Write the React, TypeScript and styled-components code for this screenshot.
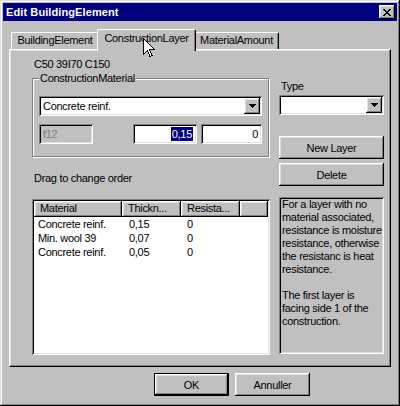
import styled, { createGlobalStyle } from 'styled-components'

const GlobalStyle = createGlobalStyle`
  html, body {
    margin: 0;
    padding: 0;
    background: #c0c0c0;
  }
  body {
    font-family: "Liberation Sans", Arial, sans-serif;
    font-size: 11px;
    overflow: hidden;
  }
  * {
    box-sizing: border-box;
  }
`

const raised = `
  background: #c0c0c0;
  box-shadow: inset -1px -1px #000, inset 1px 1px #fff, inset -2px -2px #808080, inset 2px 2px #dfdfdf;
`

const sunken = `
  box-shadow: inset 1px 1px #808080, inset -1px -1px #fff, inset 2px 2px #000, inset -2px -2px #dfdfdf;
`

const Window = styled.div`
  position: relative;
  width: 400px;
  height: 406px;
  padding: 3px;
  background: #c0c0c0;
  box-shadow: inset -1px -1px #000, inset 1px 1px #dfdfdf, inset -2px -2px #808080, inset 2px 2px #fff;
  display: flex;
  flex-direction: column;
  color: #000;
  letter-spacing: -0.3px;
`

const TitleBar = styled.div`
  height: 18px;
  background: #000080;
  color: #fff;
  display: flex;
  align-items: center;
  justify-content: space-between;
  padding: 0 2px 0 3px;
  font-weight: bold;
  letter-spacing: 0.1px;
  line-height: 18px;
`

const CloseButton = styled.div`
  ${raised}
  width: 16px;
  height: 14px;
  display: flex;
  align-items: center;
  justify-content: center;
`

const TabRow = styled.div`
  position: relative;
  z-index: 1;
  display: flex;
  align-items: flex-end;
  height: 20px;
  margin-top: 8px;
  padding-left: 8px;
`

const Tab = styled.div<{ $active?: boolean; $w: number }>`
  position: relative;
  z-index: ${(p) => (p.$active ? 2 : 1)};
  width: ${(p) => p.$w}px;
  height: ${(p) => (p.$active ? 22 : 17)}px;
  margin: 0 ${(p) => (p.$active ? '-2px' : '0')} ${(p) => (p.$active ? '-2px' : '0')};
  padding-top: ${(p) => (p.$active ? 1 : 0)}px;
  background: #c0c0c0;
  border-top: 1px solid #fff;
  border-left: 1px solid #fff;
  border-right: 1px solid #000;
  border-radius: 2px 2px 0 0;
  box-shadow: inset -1px 0 #808080;
  text-align: center;
  line-height: 15px;
  white-space: nowrap;
`

const Panel = styled.div`
  width: 382px;
  height: 318px;
  margin-left: 6px;
  border: 1px solid;
  border-color: #fff #000 #000 #fff;
  box-shadow: inset -1px -1px #808080, inset 1px 1px #dfdfdf;
  padding: 8px 6px 0 22px;
  display: flex;
  gap: 9px;
`

const Column = styled.div<{ $w: number }>`
  width: ${(p) => p.$w}px;
  display: flex;
  flex-direction: column;
`

const Caption = styled.div<{ $top?: number }>`
  margin-top: ${(p) => p.$top ?? 0}px;
  padding-left: 2px;
  line-height: 13px;
  height: 13px;
  white-space: nowrap;
`

const GroupBox = styled.div`
  position: relative;
  margin-top: 7px;
  width: 237px;
  border: 1px solid #808080;
  box-shadow: inset 1px 1px #fff, 1px 1px #fff;
  padding: 17px 6px 12px 6px;
`

const Legend = styled.span`
  position: absolute;
  top: -7px;
  left: 6px;
  padding: 0 1px;
  background: #c0c0c0;
  line-height: 13px;
`

const Combo = styled.div<{ $top?: number }>`
  ${sunken}
  margin-top: ${(p) => p.$top ?? 0}px;
  height: 20px;
  padding: 2px;
  background: #fff;
  display: flex;
`

const ComboText = styled.div`
  flex: 1;
  padding-left: 2px;
  line-height: 16px;
  white-space: nowrap;
`

const DropButton = styled.div`
  ${raised}
  width: 16px;
  height: 16px;
  display: flex;
  align-items: center;
  justify-content: center;
`

const FieldRow = styled.div`
  margin-top: 8px;
  display: flex;
  justify-content: space-between;
`

const FieldPair = styled.div`
  display: flex;
  gap: 4px;
`

const Field = styled.div<{ $w: number; $disabled?: boolean; $right?: boolean }>`
  ${sunken}
  width: ${(p) => p.$w}px;
  height: 20px;
  padding: 2px 4px;
  background: ${(p) => (p.$disabled ? '#c0c0c0' : '#fff')};
  color: ${(p) => (p.$disabled ? '#808080' : '#000')};
  text-align: ${(p) => (p.$right ? 'right' : 'left')};
  line-height: 16px;
`

const Selected = styled.span`
  background: #000080;
  color: #fff;
  padding: 1px 1px;
`

const ListView = styled.div`
  ${sunken}
  margin-top: 14px;
  height: 156px;
  padding: 2px;
  background: #fff;
  display: flex;
  flex-direction: column;
`

const HeaderRow = styled.div`
  display: flex;
  height: 16px;
`

const HeaderCell = styled.div<{ $w?: number }>`
  ${raised}
  ${(p) => (p.$w ? `width: ${p.$w}px;` : 'flex: 1;')}
  height: 16px;
  padding-left: 6px;
  line-height: 14px;
  white-space: nowrap;
`

const Row = styled.div`
  display: flex;
  height: 14px;
  line-height: 14px;
`

const Cell = styled.div<{ $w?: number; $pad?: number }>`
  ${(p) => (p.$w ? `width: ${p.$w}px;` : 'flex: 1;')}
  padding-left: ${(p) => p.$pad ?? 0}px;
  white-space: nowrap;
`

const Button = styled.div<{ $top?: number; $w?: number; $default?: boolean }>`
  ${raised}
  margin-top: ${(p) => p.$top ?? 0}px;
  width: ${(p) => (p.$w ? `${p.$w}px` : '100%')};
  height: 23px;
  display: flex;
  align-items: center;
  justify-content: center;
  ${(p) => (p.$default ? 'border: 1px solid #000;' : '')}
`

const InfoBox = styled.div`
  ${sunken}
  margin-top: 11px;
  height: 157px;
  padding: 1px 3px;
  line-height: 13px;
  white-space: nowrap;
`

const ButtonBar = styled.div`
  display: flex;
  gap: 6px;
  margin-top: 6px;
  padding-left: 151px;
`

const Cursor = styled.svg`
  position: absolute;
  left: 143px;
  top: 38px;
  z-index: 5;
`

const CloseGlyph = () => {
  const rows = ['11000011', '01100110', '00111100', '00011000', '00111100', '01100110', '11000011']
  return (
    <svg width="8" height="7" viewBox="0 0 8 7" shapeRendering="crispEdges">
      {rows.flatMap((r, y) =>
        r.split('').map((c, x) => (c === '1' ? <rect key={`${x}_${y}`} x={x} y={y} width="1" height="1" fill="#000" /> : null)),
      )}
    </svg>
  )
}

const DownArrow = () => (
  <svg width="7" height="4" viewBox="0 0 7 4" shapeRendering="crispEdges">
    <path d="M0 0h7v1H6v1H5v1H4v1H3V3H2V2H1V1H0z" fill="#000" />
  </svg>
)

const layers = [
  { material: 'Concrete reinf.', thickness: '0,15', resistance: '0' },
  { material: 'Min. wool 39', thickness: '0,07', resistance: '0' },
  { material: 'Concrete reinf.', thickness: '0,05', resistance: '0' },
]

const infoLines = [
  'For a layer with no',
  'material associated,',
  'resistance is moisture',
  'resistance, otherwise',
  'the resistanc is heat',
  'resistance.',
  '',
  'The first layer is',
  'facing side 1 of the',
  'construction.',
]

export default function App() {
  return (
    <>
      <GlobalStyle />
      <Window>
        <TitleBar>
          <span>Edit BuildingElement</span>
          <CloseButton>
            <CloseGlyph />
          </CloseButton>
        </TitleBar>

        <TabRow>
          <Tab $w={88}>BuildingElement</Tab>
          <Tab $w={99} $active>
            ConstructionLayer
          </Tab>
          <Tab $w={85}>MaterialAmount</Tab>
        </TabRow>

        <Panel>
          <Column $w={238}>
            <Caption>C50 39I70 C150</Caption>
            <GroupBox>
              <Legend>ConstructionMaterial</Legend>
              <Combo>
                <ComboText>Concrete reinf.</ComboText>
                <DropButton>
                  <DownArrow />
                </DropButton>
              </Combo>
              <FieldRow>
                <Field $w={54} $disabled>
                  f12
                </Field>
                <FieldPair>
                  <Field $w={64} $right>
                    <Selected>0,15</Selected>
                  </Field>
                  <Field $w={61} $right>
                    0
                  </Field>
                </FieldPair>
              </FieldRow>
            </GroupBox>
            <Caption $top={15}>Drag to change order</Caption>
            <ListView>
              <HeaderRow>
                <HeaderCell $w={88}>Material</HeaderCell>
                <HeaderCell $w={59}>Thickn...</HeaderCell>
                <HeaderCell $w={59}>Resista...</HeaderCell>
                <HeaderCell />
              </HeaderRow>
              {layers.map((layer, i) => (
                <Row key={`layer_${i}`}>
                  <Cell $w={95} $pad={4}>
                    {layer.material}
                  </Cell>
                  <Cell $w={58}>{layer.thickness}</Cell>
                  <Cell>{layer.resistance}</Cell>
                </Row>
              ))}
            </ListView>
          </Column>

          <Column $w={105}>
            <Caption $top={22}>Type</Caption>
            <Combo $top={2}>
              <ComboText />
              <DropButton>
                <DownArrow />
              </DropButton>
            </Combo>
            <Button $top={21}>New Layer</Button>
            <Button $top={4}>Delete</Button>
            <InfoBox>
              {infoLines.map((line, i) => (
                <div key={`info_${i}`}>{line || '\u00a0'}</div>
              ))}
            </InfoBox>
          </Column>
        </Panel>

        <ButtonBar>
          <Button $w={75} $default>
            OK
          </Button>
          <Button $w={75}>Annuller</Button>
        </ButtonBar>

        <Cursor width="12" height="20" viewBox="0 0 12 20" shapeRendering="crispEdges">
          <path d="M0.5 0.5V16.5L4.5 12.5L7 18.5L9 17.5L6.5 11.5H11.5Z" fill="#fff" stroke="#000" strokeWidth="1" />
        </Cursor>
      </Window>
    </>
  )
}
